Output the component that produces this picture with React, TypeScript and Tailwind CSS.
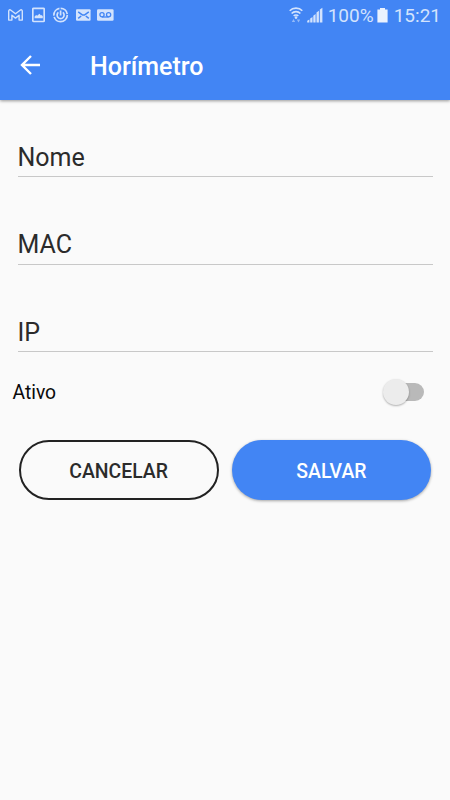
import { useState } from "react";

const FIELDS = ["Nome", "MAC", "IP"];

/** Left side of the status bar: pending notification icons. */
function Notifications() {
  return (
    <div className="flex items-center text-[#d3e3fd]">
      <svg className="ml-2 h-4 w-[15px]" viewBox="0 0 15 16" fill="none">
        <path
          d="M.7 13.1V4.2c0-1.4 1.2-1.8 2.2-1L7.5 6.8l4.6-3.6c1-.8 2.2-.4 2.2 1v8.9h-3.2V8.2l-3.6 2.9-3.6-2.9v4.9Z"
          stroke="currentColor"
          strokeWidth="1.4"
          strokeLinejoin="round"
        />
      </svg>
      <svg className="ml-[9px] h-4 w-[13px]" viewBox="0 0 13 16">
        <rect
          x="0.8"
          y="1.3"
          width="11.4"
          height="13.2"
          rx="0.8"
          fill="none"
          stroke="currentColor"
          strokeWidth="1.7"
        />
        <path
          d="M2.6 11.2V9.4l1.5-1.4 1.1.7L7.4 6.8l1.6 1.7.8-.5 1 1.3v1.9Z"
          fill="currentColor"
        />
      </svg>
      <svg className="ml-2 h-4 w-4" viewBox="0 0 16 16" fill="none">
        <circle
          cx="7.6"
          cy="8"
          r="6.7"
          stroke="currentColor"
          strokeWidth="1.7"
          strokeDasharray="19 1.2 10 1.2 9.5 1.2"
        />
        <path
          d="M5.4 5.4a3.5 3.5 0 1 0 4.4 0M7.6 3.4v5"
          stroke="currentColor"
          strokeWidth="1.7"
        />
      </svg>
      <svg className="ml-[7px] h-4 w-[15px]" viewBox="0 0 15 16">
        <rect y="2.2" width="14.6" height="11.6" rx="1" fill="currentColor" />
        <path
          d="M2.2 4.8l3.4 2.6a3.2 3.2 0 0 0 3.8 0l3.4-2.6M2.2 11.4l3-2.4M12.8 11.4l-3-2.4"
          fill="none"
          stroke="#4285f4"
          strokeWidth="1.5"
        />
      </svg>
      <svg className="ml-[6px] h-4 w-[17px]" viewBox="0 0 17 16">
        <rect y="2.2" width="16.6" height="11.6" rx="1.2" fill="currentColor" />
        <g fill="none" stroke="#4285f4" strokeWidth="1.3">
          <circle cx="5" cy="7.8" r="2.1" />
          <circle cx="11.6" cy="7.8" r="2.1" />
          <path d="M5 10h6.6" />
        </g>
      </svg>
    </div>
  );
}

function StatusBar() {
  return (
    <div className="flex h-[30px] items-center justify-between">
      <Notifications />
      <div className="flex items-center pr-[9px] text-[#d3e3fd]">
        <svg className="h-[18px] w-[14px]" viewBox="0 0 14 18" fill="none">
          <g stroke="currentColor" strokeWidth="1.6">
            <path d="M.7 4.8C4 1.2 10 1.2 13.3 4.8" />
            <path d="M2.6 7.5c2.3-2.5 6.5-2.5 8.8 0" />
            <path d="M4.7 10c1.2-1.3 3.4-1.3 4.6 0" />
          </g>
          <circle cx="7" cy="11.6" r="1.3" fill="currentColor" />
          <path
            d="M2.8 16h3.4l-1.7-3ZM7.8 13.4h3.4l-1.7 3Z"
            fill="currentColor"
            opacity="0.55"
          />
        </svg>
        <svg
          className="ml-1 h-4 w-4"
          viewBox="0 0 16 16"
          fill="currentColor"
        >
          <path d="M.2 15.4v-1.6l2.2-1.4v3ZM3.2 15.4v-3.8l2.3-1.6v5.4ZM6.3 15.4V8.8l2.3-1.7v8.3ZM9.5 15.4V5.6l2.4-1.8v11.6ZM12.8 15.4V2.6L15.4.8v14.6Z" />
        </svg>
        <span className="ml-[5px] w-[48px] pt-px text-[19px] leading-[30px]">
          100%
        </span>
        <svg className="ml-px h-4 w-[11px]" viewBox="0 0 11 16">
          <path
            d="M3 1h5v1.6h2.6V15.6H.4V2.6H3Z"
            fill="#eaf2fe"
          />
        </svg>
        <span className="ml-[6px] pt-px text-[19px] leading-[30px]">15:21</span>
      </div>
    </div>
  );
}

function Field({ label }: { label: string }) {
  return (
    <input
      aria-label={label}
      placeholder={label}
      className="block h-[41px] w-full border-b border-[#c8c8c8] bg-transparent pt-[2px] text-[25px] text-[#2b2b2b] outline-none placeholder:text-[#2b2b2b]"
    />
  );
}

function Toggle({ on, onChange }: { on: boolean; onChange: () => void }) {
  return (
    <button
      role="switch"
      aria-checked={on}
      aria-label="Ativo"
      onClick={onChange}
      className={`mr-[14px] flex h-[18px] w-[39px] items-center rounded-full ${
        on ? "justify-end bg-[#a1c2fa]" : "bg-[#b9b9b9]"
      }`}
    >
      <span
        className={`-ml-[2px] size-[26px] shrink-0 rounded-full shadow-[0_1px_2px_rgba(0,0,0,0.3)] ${
          on ? "bg-[#4285f4]" : "bg-[#ececec]"
        }`}
      />
    </button>
  );
}

export default function App() {
  const [active, setActive] = useState(false);

  return (
    <div className="h-[800px] w-[450px] bg-[#fafafa] font-['Roboto',sans-serif]">
      <header className="h-[100px] bg-[#4285f4] shadow-[0_1px_3px_rgba(0,0,0,0.4)]">
        <StatusBar />
        <div className="flex h-[70px] items-center pl-5 text-white">
          <svg
            className="size-5"
            viewBox="0 0 20 20"
            fill="none"
            stroke="currentColor"
            strokeWidth="2.4"
          >
            <path d="M20 10H2M11 1L2 10l9 9" />
          </svg>
          <h1 className="ml-[50px] pt-1 text-[25px] font-medium">Horímetro</h1>
        </div>
      </header>

      <main>
        <div className="flex flex-col gap-[46.5px] px-[17.5px] pt-[36.4px]">
          {FIELDS.map((f) => (
            <Field key={f} label={f} />
          ))}
        </div>

        <div className="mt-[21.6px] flex h-9 items-center justify-between pr-3 pl-[12.5px]">
          <span className="pt-[3px] text-[19.3px] text-[#0a0a0a]">Ativo</span>
          <Toggle on={active} onChange={() => setActive(!active)} />
        </div>

        <div className="mt-[30px] grid grid-cols-2 gap-[13px] px-[18.7px]">
          <button className="h-[60px] rounded-full border-2 border-[#222] pt-[3px] text-[19.4px] font-medium text-[#2b2b2b]">
            CANCELAR
          </button>
          <button className="h-[60px] rounded-full bg-[#4285f4] pt-[3px] text-[19.4px] font-medium text-white shadow-[0_1px_3px_rgba(0,0,0,0.35)]">
            SALVAR
          </button>
        </div>
      </main>
    </div>
  );
}
